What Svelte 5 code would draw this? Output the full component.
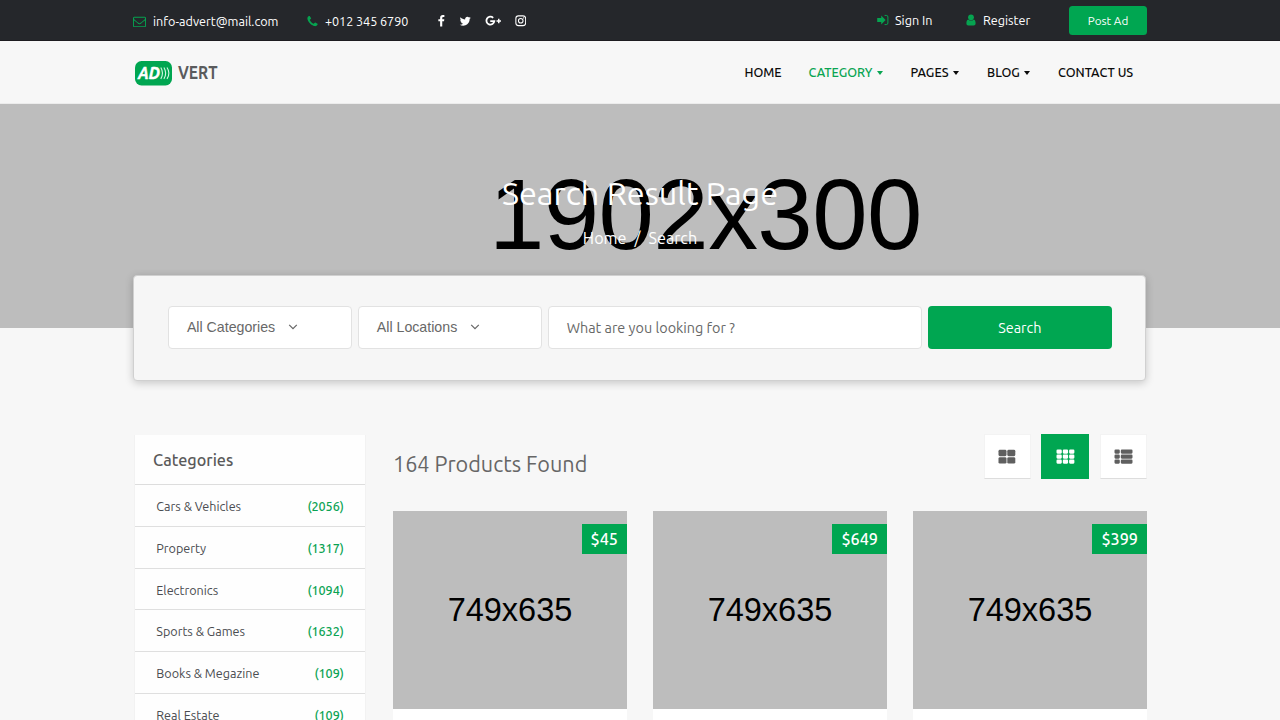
<script>
  const nav = [
    { label: 'HOME', cls: 'n-home' },
    { label: 'CATEGORY', cls: 'n-cat', caret: true, active: true },
    { label: 'PAGES', cls: 'n-pages', caret: true },
    { label: 'BLOG', cls: 'n-blog', caret: true },
    { label: 'CONTACT US', cls: 'n-contact' }
  ];
  const categories = [
    ['Cars & Vehicles', 2056],
    ['Property', 1317],
    ['Electronics', 1094],
    ['Sports & Games', 1632],
    ['Books & Megazine', 109],
    ['Real Estate', 109]
  ];
  const prices = ['$45', '$649', '$399'];
</script>

<div class="page">
  <header class="topbar">
    <div class="contact">
      <span class="mail">
        <svg width="13" height="13" viewBox="0 0 1792 1792" fill="#06a350"><path d="M1664 1504v-768q-32 36-69 66-268 206-426 338-51 43-83 67t-86.5 48.5-102.5 24.5h-2q-48 0-102.5-24.5t-86.5-48.5-83-67q-158-132-426-338-37-30-69-66v768q0 13 9.5 22.5t22.5 9.5h1472q13 0 22.5-9.5t9.5-22.5zm0-1051v-24.5l-.5-13-3-12.5-5.5-9-9-7.5-14-2.5h-1472q-13 0-22.5 9.5t-9.5 22.5q0 168 147 284 193 152 401 317 6 5 35 29.5t46 37.5 44.5 31.5 50.5 27.5 43 9h2q20 0 43-9t50.5-27.5 44.5-31.5 46-37.5 35-29.5q208-165 401-317 54-43 100.5-115.5t46.5-131.5zm128-37v1088q0 66-47 113t-113 47h-1472q-66 0-113-47t-47-113v-1088q0-66 47-113t113-47h1472q66 0 113 47t47 113z"/></svg>
        <span>info-advert@mail.com</span>
      </span>
      <span class="phone">
        <svg width="13" height="13" viewBox="0 0 1792 1792" fill="#06a350"><path d="M1600 1240q0 27-10 70.5t-21 68.5q-21 50-122 106-94 51-186 51-27 0-52.5-3.5t-57.5-12.5-47.5-14.5-55.5-20.5-49-18q-98-35-175-83-128-79-264.5-215.5t-215.5-264.5q-48-77-83-175-3-9-18-49t-20.5-55.5-14.5-47.5-12.5-57.5-3.5-52.5q0-92 51-186 56-101 106-122 25-11 68.5-21t70.5-10q14 0 21 3 18 6 53 76 11 19 30 54t35 63.5 31 53.5q3 4 17.5 25t21.5 35.5 7 28.5q0 20-28.5 50t-62 55-62 53-28.5 46q0 9 5 22.5t8.5 20.5 14 24 11.5 19q76 137 174 235t235 174q2 1 19 11.5t24 14 20.5 8.5 22.5 5q18 0 46-28.5t53-62 55-62 50-28.5q14 0 28.5 7t35.5 21.5 25 17.5q25 15 53.5 31t63.5 35 54 30q70 35 76 53 3 7 3 21z"/></svg>
        <span>+012 345 6790</span>
      </span>
      <span class="social">
        <svg class="fb" width="12.5" height="12.5" viewBox="0 0 1792 1792"><path d="M1343 12v264h-157q-86 0-116 36t-30 108v189h293l-39 296h-254v759h-306v-759h-255v-296h255v-218q0-186 104-288.5t277-102.5q147 0 228 12z"/></svg>
        <svg class="tw" width="12.5" height="12.5" viewBox="0 0 1792 1792"><path d="M1684 408q-67 98-162 167 1 14 1 42 0 130-38 259.5t-115.5 248.5-184.5 210.5-258 146-323 54.5q-271 0-496-145 35 4 78 4 225 0 401-138-105-2-188-64.5t-114-159.5q33 5 61 5 43 0 85-11-112-23-185.5-111.5t-73.5-205.5v-4q68 38 146 41-66-44-105-115t-39-154q0-88 44-163 121 149 294.5 238.5t371.5 99.5q-8-38-8-74 0-134 94.5-228.5t228.5-94.5q140 0 236 102 109-21 205-78-37 115-142 178 93-10 186-50z"/></svg>
        <svg class="gp" width="16.5" height="11.6" viewBox="0 0 17 12" fill="none" stroke="#fff"><path d="M8.4 2.9A4.1 4.1 0 1 0 9.6 6.4H5.4" stroke-width="1.9"/><path d="M14.2 4v4.6M11.9 6.3h4.6" stroke-width="1.5"/></svg>
        <svg class="ig" width="11.5" height="11.5" viewBox="0 0 12 12" fill="none" stroke="#fff" stroke-width="1.1"><rect x=".9" y=".9" width="10.2" height="10.2" rx="2.7"/><circle cx="6" cy="6" r="2.4"/><circle cx="9" cy="3" r=".65" fill="#fff" stroke="none"/></svg>
      </span>
    </div>
    <div class="account">
      <span class="signin">
        <svg width="12" height="12" viewBox="0 0 12 12"><path d="M.2 4.1h4V1.6L8.6 6l-4.4 4.4V7.9h-4z" fill="#06a350"/><path d="M7.6 1.4h1.7a1.6 1.6 0 0 1 1.6 1.6v6a1.6 1.6 0 0 1-1.6 1.6H7.6" fill="none" stroke="#06a350" stroke-width="1"/></svg>
        <span>Sign In</span>
      </span>
      <span class="register">
        <svg width="10" height="12" viewBox="0 0 10 12" fill="#06a350"><circle cx="5" cy="3.3" r="2.9"/><path d="M2.3 5.4C.7 5.6.4 7.6.4 9.4c0 1.2.8 2 1.9 2h5.4c1.1 0 1.9-.8 1.9-2 0-1.8-.3-3.8-1.9-4a4.1 4.1 0 0 1-5.4 0z"/></svg>
        <span>Register</span>
      </span>
      <button class="post">Post Ad</button>
    </div>
  </header>

  <nav class="navbar">
    <a class="logo" href="#top" aria-label="AD VERT">
      <svg width="84" height="26" viewBox="0 0 84 26">
        <rect x="0" y="1" width="37" height="24.5" rx="6.5" fill="#00a651"/>
        <text x="3" y="18.8" textLength="22" lengthAdjust="spacingAndGlyphs" class="logo-ad">AD</text>
        <g fill="none" stroke="#d5f7e4" stroke-width="1.1"><path d="M25.8 7.5q3.4 5.7 0 11.4M28.9 7.5q3.6 5.7 0 11.4M32 7.5q3.8 5.7 0 11.4"/></g>
        <text x="43" y="18.8" textLength="39.5" lengthAdjust="spacingAndGlyphs" class="logo-vert">VERT</text>
      </svg>
    </a>
    <ul>
      {#each nav as n}
        <li class={n.cls} class:active={n.active}><span>{n.label}</span>{#if n.caret}<i class="caret"></i>{/if}</li>
      {/each}
    </ul>
  </nav>

  <section class="hero">
    <div class="placeholder" aria-hidden="true">1902x300</div>
    <h1>Search Result Page</h1>
    <p class="crumbs"><span>Home</span><span class="slash">/</span><span>Search</span></p>
  </section>

  <section class="search">
    <div class="select">All Categories <svg width="10" height="6" viewBox="0 0 10 6"><path d="M1.2.8 5 4.6 8.8.8"/></svg></div>
    <div class="select">All Locations <svg width="10" height="6" viewBox="0 0 10 6"><path d="M1.2.8 5 4.6 8.8.8"/></svg></div>
    <div class="query"><span>What are you looking for ?</span></div>
    <button class="go">Search</button>
  </section>

  <main>
    <aside>
      <h2>Categories</h2>
      <ul>
        {#each categories as [name, count]}
          <li><span>{name}</span><b>({count})</b></li>
        {/each}
      </ul>
    </aside>
    <section class="results">
      <div class="head">
        <h3>164 Products Found</h3>
        <div class="views">
          <span class="view"><svg width="18" height="16" viewBox="0 0 18 16">
            {#each [0.8, 8.2] as y}{#each [0.5, 9.3] as x}<rect {x} {y} width="8" height="6.4" rx="1.4"/>{/each}{/each}
          </svg></span>
          <span class="view on"><svg width="19" height="16" viewBox="0 0 19 16">
            {#each [0.6, 5.6, 10.6] as y}{#each [0.5, 6.8, 13.1] as x}<rect {x} {y} width="5.3" height="4.1" rx="1.1"/>{/each}{/each}
          </svg></span>
          <span class="view"><svg width="19" height="16" viewBox="0 0 19 16">
            {#each [0.6, 5.6, 10.6] as y}<rect x=".5" {y} width="5.3" height="4.1" rx="1.1"/><rect x="6.8" {y} width="11.7" height="4.1" rx="1.1"/>{/each}
          </svg></span>
        </div>
      </div>
      <div class="grid">
        {#each prices as price}
          <article>
            <div class="thumb">749x635<span class="price">{price}</span></div>
          </article>
        {/each}
      </div>
    </section>
  </main>
</div>

<style>
  :global(body) { margin: 0; background: #f7f7f7; }
  * { box-sizing: border-box; }
  .page { width: 1280px; height: 720px; overflow: hidden; background: #f7f7f7; font-family: Ubuntu, "Noto Sans", sans-serif; color: #444; }
  ul, h1, h2, h3, p { margin: 0; padding: 0; list-style: none; font-weight: 400; }
  svg { display: block; flex: none; }
  button { border: 0; padding: 0; background: #00a651; color: #fff; font-family: inherit; white-space: nowrap; }

  .topbar { height: 41px; background: #25272b; border-bottom: 1px solid #1d1c20; padding: 0 133px; display: flex; justify-content: space-between; color: #fff; font-size: 12.6px; line-height: 40px; white-space: nowrap; }
  .contact, .contact > span, .account, .account > span { display: flex; align-items: center; }
  .contact { padding-top: 1px; height: 41px; }
  .mail { width: 173px; gap: 7px; }
  .phone { width: 128.7px; gap: 6px; letter-spacing: -.05px; }
  .social { fill: #fff; }
  .fb { margin-right: 11.5px; }
  .tw { margin-right: 13.5px; }
  .gp { margin-right: 13.5px; }
  .signin { width: 89px; gap: 6px; }
  .register { width: 103px; gap: 7px; }
  .account { height: 40px; }
  .post { width: 78px; height: 29px; border-radius: 3.5px; font-size: 11.7px; line-height: 29px; margin: 1px 0 0; }

  .navbar { height: 63px; display: flex; justify-content: space-between; align-items: center; padding: 0 146px 0 135px; border-bottom: 1px solid #ececec; }
  .logo { padding-top: 1px; }
  .logo-ad { font: italic 700 16px Ubuntu, "Noto Sans", sans-serif; fill: #fff; stroke: #fff; stroke-width: .5; }
  .logo-vert { font: 700 17.5px Ubuntu, "Noto Sans", sans-serif; fill: #5a5b5d; }
  .navbar ul { display: flex; font-size: 12.6px; color: #0b0b0b; }
  .navbar li { display: flex; align-items: center; font-weight: 500; white-space: nowrap; }
  .navbar li.active { color: #0aa552; }
  .caret { margin: 2px 0 0 4.2px; border: 3.6px solid transparent; border-width: 4px 3.6px 0; border-top-color: currentColor; }
  .n-home { width: 64px; }
  .n-cat { width: 102px; }
  .n-pages { width: 76.5px; }
  .n-blog { width: 71px; }
  .n-contact { width: 76px; }

  .hero { position: relative; height: 223.5px; background: #bdbdbd; color: #fff; text-align: center; padding-top: 67px; }
  .placeholder { position: absolute; left: 489px; top: 53px; font: 99.6px/115px "Liberation Sans", sans-serif; letter-spacing: -.6px; color: #000; }
  h1 { position: relative; font-size: 32.4px; line-height: 44px; }
  .crumbs { position: relative; display: flex; justify-content: center; font-size: 16.2px; line-height: 24px; padding-top: 11px; }
  .slash { margin: 0 8px; }

  .search { position: relative; width: 1013px; height: 106px; margin: -53px 0 0 133.4px; padding: 30.5px 33.5px; display: grid; grid-template-columns: 184.5px 184.5px 374.5px 184.5px; column-gap: 5.4px; background: #f6f6f6; border: 1px solid #d0d0d0; border-radius: 4px; box-shadow: 0 2px 9px rgba(0,0,0,.2); color: #686868; }
  .select, .query { height: 43px; border: 1px solid #e2e2e2; border-radius: 4px; background: #fff; padding: 0 18px; display: flex; align-items: center; white-space: nowrap; }
  .select { font: 14.2px/40px "Liberation Sans", sans-serif; gap: 13px; padding-bottom: 2px; }
  .select svg { fill: none; stroke: #666; stroke-width: 1.2; }
  .query { font-size: 14.4px; }
  .go { height: 43px; border-radius: 4px; font-size: 14.4px; }

  main { display: flex; margin: 53.5px 0 0 134px; gap: 27px; }
  aside { width: 232px; border: 1px solid #f2f2f2; border-top: 0; background: #fefefe; margin-top: 1px; }
  h2 { height: 50px; border-bottom: 1px solid #ddd; font-size: 16.2px; line-height: 50px; font-weight: 500; color: #5a5a5a; padding-left: 18px; }
  aside li { height: 41.75px; border-bottom: 1.3px solid #dfdfdf; display: flex; justify-content: space-between; align-items: center; padding: 1.5px 21.2px 0 21.3px; font-size: 12.6px; color: #4a4c50; }
  aside b { font-weight: 500; color: #0ba353; letter-spacing: -.05px; }
  .results { width: 754px; }
  .head { height: 76.5px; display: flex; justify-content: space-between; }
  h3 { font-size: 21.6px; line-height: 61px; color: #666; }
  .views { display: flex; gap: 10.5px; margin-right: .5px; }
  .view { width: 47px; height: 45px; display: grid; place-items: center; background: #fff; border: 1px solid #f3f3f3; border-bottom-color: #ddd; fill: #5f5f5f; }
  .view.on { width: 48px; background: #00a651; border-color: #00a651; fill: #fff; }
  .grid { display: grid; grid-template-columns: repeat(3, 234px); column-gap: 26px; }
  article { height: 320px; background: #fff; }
  .thumb { position: relative; height: 198px; background: #bdbdbd; text-align: center; font: 32.5px/198px "Liberation Sans", sans-serif; color: #000; }
  .price { position: absolute; top: 13px; right: 0; height: 30px; padding: 0 9px; background: #00a651; color: #fff; font: 500 16.2px/31px Ubuntu, "Noto Sans", sans-serif; }
</style>
